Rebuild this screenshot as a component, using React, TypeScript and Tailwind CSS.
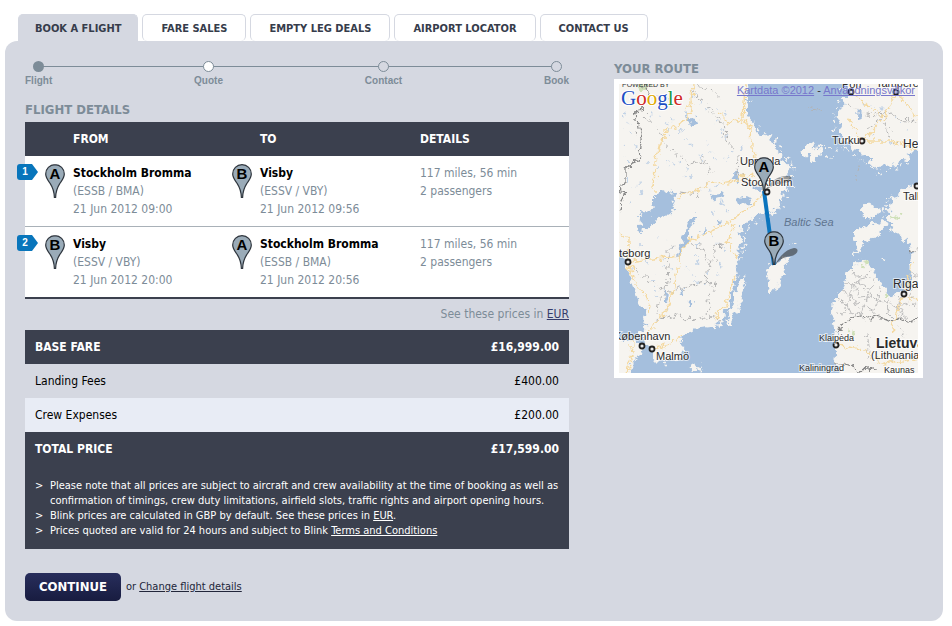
import type { ReactNode } from "react";

const tabs = ["BOOK A FLIGHT", "FARE SALES", "EMPTY LEG DEALS", "AIRPORT LOCATOR", "CONTACT US"];

const steps = ["Flight", "Quote", "Contact", "Book"];

const stockholm = { pin: "A", name: "Stockholm Bromma", code: "(ESSB / BMA)" };
const visby = { pin: "B", name: "Visby", code: "(ESSV / VBY)" };

const legs = [
  { from: stockholm, to: visby, departs: "21 Jun 2012 09:00", arrives: "21 Jun 2012 09:56" },
  { from: visby, to: stockholm, departs: "21 Jun 2012 20:00", arrives: "21 Jun 2012 20:56" },
];

const cities = [
  { x: 148, y: 108 },
  { x: 243, y: 57 },
  { x: 232, y: 8 },
  { x: 277, y: 8 },
  { x: 298, y: 102 },
  { x: 285, y: 210 },
  { x: 217, y: 261 },
  { x: 9, y: 178 },
  { x: 23, y: 262 },
  { x: 33, y: 265 },
];

const labels = [
  { x: 121, y: 81, size: 11, text: "Uppsala" },
  { x: 122, y: 102, size: 11, text: "Stockholm" },
  { x: 213, y: 60, size: 11, text: "Turku" },
  { x: 284, y: 64, size: 12, text: "Helsinki" },
  { x: 284, y: 116, size: 11, text: "Tallinn" },
  { x: 223, y: 4, size: 11, text: "Pori" },
  { x: 257, y: 3, size: 11, text: "Tampere" },
  { x: 274, y: 204, size: 12, text: "Rīga" },
  { x: 200, y: 257, size: 9, text: "Klaipėda" },
  { x: 180, y: 287, size: 9, text: "Kaliningrad" },
  { x: 265, y: 289, size: 9, text: "Kaunas" },
  { x: 252, y: 275, size: 11, text: "(Lithuania)" },
  { x: -6, y: 173, size: 11, text: "öteborg" },
  { x: -5, y: 256, size: 11, text: "København" },
  { x: 37, y: 276, size: 11, text: "Malmö" },
];

function PinShape({ letter }: { letter: string }) {
  return (
    <>
      <path
        d="M10 .7C4.7.7.7 4.8.7 10c0 3.8 2.2 6.1 4.4 9.3C7.600 23.100 9.200 27.300 9.400 33.500h1.200c.2-6.200 1.800-10.400 4.300-14.200 2.200-3.200 4.400-5.500 4.400-9.300C19.300 4.800 15.300.7 10 .7Z"
        fill="#9aabb8"
        stroke="#2e353d"
        strokeWidth="1.200"
      />
      <text x="10" y="15" textAnchor="middle" fontSize="15" fontWeight="700" fontFamily="Liberation Sans, sans-serif" fill="#000">
        {letter}
      </text>
    </>
  );
}

function Pin({ letter }: { letter: string }) {
  return (
    <svg className="h-[34px] w-5 shrink-0" viewBox="0 0 20 34" aria-hidden="true">
      <PinShape letter={letter} />
    </svg>
  );
}

function LegBadge({ number }: { number: number }) {
  return (
    <span className="absolute top-2 -left-2 flex h-4 w-[21px]">
      <svg className="absolute inset-0" width="21" height="16" viewBox="0 0 21 16" aria-hidden="true">
        <path d="M3 0h12l6 8-6 8H3a3 3 0 0 1-3-3V3a3 3 0 0 1 3-3Z" fill="#0875bb" />
      </svg>
      <span className="relative w-4 text-center font-[Liberation_Sans,sans-serif] text-[10px] leading-4 font-bold text-white">{number}</span>
    </span>
  );
}

function Airport({ place, time }: { place: typeof visby; time: string }) {
  return (
    <div className="flex gap-2">
      <Pin letter={place.pin} />
      <div>
        <p className="font-bold text-black">{place.name}</p>
        <p>{place.code}</p>
        <p>{time}</p>
      </div>
    </div>
  );
}

function TextLink({ children }: { children: ReactNode }) {
  return (
    <a href="#" className="underline">
      {children}
    </a>
  );
}

function RouteMap() {
  return (
    <div className="relative border-5 border-white">
      <svg className="block w-full" viewBox="0 0 299 289" role="img" aria-label="Route from Stockholm to Visby" fontFamily="Liberation Sans, sans-serif">
        {/* Roughens coastlines and lake shores */}
        <filter id="coast" filterUnits="userSpaceOnUse" x="-10" y="-10" width="319" height="309">
          <feTurbulence type="fractalNoise" baseFrequency=".16" numOctaves="3" seed="4" />
          <feDisplacementMap in="SourceGraphic" scale="11" xChannelSelector="R" yChannelSelector="G" />
        </filter>
        <rect width="299" height="289" fill="#a5bfdd" />

        <g filter="url(#coast)">
          {/* Land */}
          <g fill="#f6f4f0" stroke="#f6f4f0" strokeWidth="1" strokeLinejoin="round">
            <path d="M-10 -10H126V0L129 6 126 13 130 20 127 28 129 34 134 38 133 45 139 47 142 53 149 51 151 57 156 60 157 67 162 70 161 76 168 80 171 86 168 91 170 98 166 101 167 106 163 109 164 115 159 118 160 123 153 126 149 131 144 128 138 130 134 135 130 134 128 139 123 140 122 146 118 149 123 155 119 160 122 166 117 170 120 177 116 184 118 192 114 199 116 206 110 213 111 220 106 225 105 233 100 237 98 245 94 242 86 243 79 244 74 244 69 248 64 252 61 259 65 264 62 268 62 273 55 275 46 279 41 277 34 277 35 269 31 262 27 261 25 253 21 249 26 246 24 242 29 243 25 236 28 230 26 225 23 222 19 215 15 206 12 198 12 190 8 181 5 172 1 165 -10 155Z" />
            <path d="M-10 255 11 257 20 260 24 264 22 271 17 274 13 280 9 299H-10Z" />
            <path d="M73 279 81 283 79 289 72 285Z" />
            <path d="M123 195l3-2-1 8-4 10-2 12-5 9-3 8-3-1 3-11 3-5 2-12 4-8Z" />
            <path d="M149 182l8-1 7-6 6-2-4 8-2 7 3 2-5 4-1 6-6 5-4 6-1-7-2-7 1-7Z" />
            <path d="M228 -10 230 8 225 13 226 20 221 26 219 34 223 39 220 46 225 51 224 58 231 57 234 64 241 64 240 70 248 69 253 74 251 79 258 85 265 80 272 83 281 75 287 76 290 69 309 64V-10Z" />
            <path d="M182 67l5-5 6-4 2 5 5-1 2 7-4 3-1 6-7-2-1-5-6 0Z" />
            <path d="M309 97 290 103 283 106 280 112 272 114 274 120 268 124 273 130 268 137 275 141 273 147 282 151 284 156 291 153 290 160 294 168 291 174 291 187 294 196 288 206 282 210 271 213 263 200 256 191 253 183 248 177 242 176 234 183 229 187 226 200 222 211 215 218 213 232 216 240 218 259 217 276 225 299H309Z" />
            <path d="M233 151l5-5 8-3 5-4 7 1 7-4 2 5-3 6-7 4-5 4-7 3-4 8-4 3 2-8-4-4Z" />
            <path d="M238 126l6-3 5-3 6 3 7 4-6 7-6 2-6-6Z" />
          </g>

          {/* Islets */}
          <g fill="none" stroke="#f6f4f0" strokeWidth="2" strokeDasharray="2 4 1 6 3 5">
            <path d="M130 34 146 49 160 59 167 72 174 84 172 102 165 115 163 123 145 134 127 145 125 166 120 182" />
            <path d="M223 3 215 31 217 51 228 67 247 79 258 90 279 84 293 76M205 63 228 67M206 72 216 75" />
            <path d="M271 112 265 122 264 139M175 158 176 159M263 174 264 175" />
          </g>

          {/* Lakes */}
          <g fill="#a5bfdd">
            <path d="M36 109l8-3 5 3 7-2 1 8-3 6 1 5-7 6-12 5-5 7-10 3-4-2 6-7-3-6 5-4 6 1 5-6Z" />
            <path d="M76 131l2 2-5 10-3 11-8 16-3 2 1-10 6-12 5-14Z" />
            <path d="M66 28l5 6 8 1 1 5-6 2-7-7Z" />
            <path d="M91 110l9-1 7 2-5 4-9 1ZM114 88l5-3 2 9-3 6-3-4ZM117 116l9-3 8 2-4 4-11 1ZM131 100l8 3 7-2-3 5-12-1ZM134 74l3 4-1 6-3-4Z" />
            <path d="M46 207l4 3-2 8-3-3ZM70 216l4-1-1 6-4 1ZM62 205l3 1-1 4-3-1ZM239 27l4 4-1 5-4-3ZM81 147l5-4 1 3-4 4ZM97 138l5-3-2 6Z" />
          </g>
          <g fill="none" stroke="#c3d3e6" strokeWidth="2" strokeDasharray="2 9 1 6 3 13">
            <path d="M4 30 17 62 34 85 51 77 68 94M31 29 47 38 64 50 83 75M75 11 101 42 114 69M9 95 23 108 4 123M88 21 119 37M60 77 84 107 108 99" />
            <path d="M38 150 53 164 42 179 57 190 69 184 84 205 92 183M92 151 106 167 98 190M34 194 37 213 52 228M244 19 265 25 290 45M253 51 276 62" />
            <path d="M5 60 12 104 26 98M38 12 56 20 49 60M86 58 100 80 124 62M104 118 92 130 112 128M78 160 80 190M22 160 30 184" />
          </g>

          {/* Parks */}
          <path
            d="M20 0h10l-1 9-6-3ZM242 177l6-1 2 4-6 2ZM266 207l5 4-3 4-3-4ZM233 244l4 1-2 6-4 1ZM273 133l8-2 1 3-7 1Z"
            fill="#cfe0b8"
          />

          {/* Region borders */}
          <g fill="none" stroke="#b2b2b2" strokeWidth="1" strokeDasharray="5 2">
            <path d="M26 31 37 43 45 59 60 71 69 80 86 75 91 88 87 102M73 5 83 18 91 22 97 34 105 40 108 57 117 67M119 72 118 90 127 94M77 2 91 5 103 16M60 108 81 111" />
            <path d="M13 184 25 193 34 199 48 207 50 184 49 166 57 161M71 160 84 164 89 178 97 176 95 162 106 159M89 178 87 198 98 202 88 216 90 231 72 237 59 230 37 236 41 216 47 208 62 205 87 198M90 231 100 236" />
            <path d="M228 19 244 29 258 32 267 27 281 36 298 38M246 47 263 33 276 62M189 25 203 26M236 95 240 84" />
          </g>
          <g fill="none" stroke="#bdbdbd" strokeWidth="1">
            <path d="M233 187 239 195 248 194 253 187M227 198 235 202 239 195 245 205 253 201 257 193M224 207 232 211 235 202 241 214 250 213 253 201M219 217 228 220 232 211 239 222 245 221 250 213 259 216 260 204M217 228 226 229 228 220 233 231 242 229 245 221 254 226 259 216 269 219 272 213M242 229 247 238M254 226 260 236 268 228 269 219 279 222 282 212M268 228 276 236 283 230 279 222 291 219 293 204M283 230 290 236M291 219 299 224M291 190 299 193" />
            <path d="M248 248 250 262 247 275M281 243 287 254M276 271 270 281M299 204 288 198" strokeDasharray="4 2" />
          </g>
          <g fill="none" stroke="#868686" strokeWidth="1.200">
            <path d="M24 -5 28 9 26 23 16 31 20 48 22 65 19 76 7 85 7 97 2 106 5 113 1 128" />
            <path d="M217 247 226 239 236 233 250 235 258 232 270 237 282 234 290 238 305 233M218 279 232 282 240 287 259 284M291 168 305 165" />
          </g>

          {/* Roads */}
          <g fill="none" stroke="#f4d9a0" strokeWidth="1.400">
            <path d="M9 178 16 199 27 212 31 226M9 178 10 155 0 148M9 178 40 174 60 171 68 158 97 145 124 129 145 109M60 171 56 199 50 221 38 239 26 251M59 112 76 108 91 98 110 99 131 90 147 108M145 109 143 86 133 63 132 44 124 35 126 2M74 0 73 18 67 36 45 48 40 66 36 79 35 106M100 29 110 39 124 35M114 140 109 159 118 176M116 190 108 217 96 235M12 254 14 270 8 289M34 265 50 260 62 253" />
            <path d="M243 57 273 57 299 67M243 57 265 34 277 8M265 34 236 12M243 57 230 36M277 8 299 35M285 210 299 218M285 210 293 178M285 210 275 235 272 249M217 261 242 265 265 280 299 274" />
          </g>
        </g>

        {/* Marker shadows and flight path */}
        <g fill="#3c3f42">
          <path d="M146 107C151 97 160 91 170 92c5 1 2 6-4 7-7 1-12 1-20 8Z" opacity=".5" />
          <path d="M156 181C161 171 168 165 175 164c6 0 4 7-3 8-6 1-10 2-16 9Z" opacity=".65" />
        </g>
        <path d="M145 107 155 181" stroke="#0b74bd" strokeWidth="4" />

        <g fill="#e8e8e8" stroke="#222" strokeWidth="1.800">
          {cities.map((city) => (
            <circle key={`${city.x}-${city.y}`} cx={city.x} cy={city.y} r="2.500" />
          ))}
        </g>
        <g fill="#2b2b2b" stroke="#fff" strokeWidth="2" strokeOpacity=".6" paintOrder="stroke">
          {labels.map((label) => (
            <text key={label.text} x={label.x} y={label.y} fontSize={label.size}>
              {label.text}
            </text>
          ))}
          <text x="257" y="264" fontSize="14" fontWeight="700">
            Lietuva
          </text>
        </g>
        <text x="165" y="142" fontSize="11" fontStyle="italic" fill="#5f7590">
          Baltic Sea
        </text>

        <g transform="translate(135 73)">
          <PinShape letter="A" />
        </g>
        <g transform="translate(145 147)">
          <PinShape letter="B" />
        </g>

        <text x="3" y="3" fontSize="7" fill="#333">
          POWERED BY
        </text>
        <text x="2" y="21" fontSize="21" fontFamily="Liberation Serif, serif" stroke="#fff" strokeWidth="2" paintOrder="stroke">
          <tspan fill="#1d4fc4">G</tspan>
          <tspan fill="#cf2a27">o</tspan>
          <tspan fill="#e0a800">o</tspan>
          <tspan fill="#1d4fc4">g</tspan>
          <tspan fill="#1d9a3c">l</tspan>
          <tspan fill="#cf2a27">e</tspan>
        </text>
      </svg>
      <p className="absolute top-0 right-[3px] font-[Liberation_Sans,sans-serif] text-[11px] leading-3 whitespace-nowrap text-[#333]">
        <a href="#" className="text-[#7777cc] underline">Kartdata ©2012</a> - <a href="#" className="text-[#7777cc] underline">Användningsvillkor</a>
      </p>
    </div>
  );
}

export default function App() {
  return (
    <main className="min-h-screen bg-white pt-[14px] pr-[9px] pb-[5px] pl-[5px] font-[DejaVu_Sans_Condensed,DejaVu_Sans,sans-serif] text-[12px] leading-[18px] text-[#7d8c98]">
      {/* Tabs */}
      <nav className="flex gap-1 px-[13px]">
        {tabs.map((tab, index) => (
          <a
            key={tab}
            href="#"
            className={
              index === 0
                ? "rounded-t-[5px] border border-b-0 border-[#d5d8e1] bg-[#d5d8e1] px-4 pt-[2px] text-[11px] leading-6 font-bold text-[#363c4b]"
                : "rounded-[5px] border border-b-0 border-[#d5d8e1] bg-white px-[18px] pt-[2px] text-[11px] leading-6 font-bold text-[#363c4b]"
            }
          >
            {tab}
          </a>
        ))}
      </nav>

      <div className="flex gap-[45px] rounded-[12px] bg-[#d5d8e1] p-5">
        <div className="min-w-0 flex-1">
          {/* Progress */}
          <ol className="relative flex justify-between font-[Liberation_Sans,sans-serif] text-[10px] leading-[18px] font-bold">
            <li className="absolute inset-x-3 top-[5px] h-px bg-[#7d8c98]" aria-hidden="true" />
            {steps.map((step, index) => (
              <li key={step} className="relative flex flex-col items-center">
                <span
                  className={
                    index === 0
                      ? "size-[11px] rounded-full bg-[#7d8c98]"
                      : index === 1
                        ? "size-[11px] rounded-full border border-[#7d8c98] bg-white"
                        : "size-[11px] rounded-full border border-[#7d8c98] bg-[#d5d8e1]"
                  }
                />
                {step}
              </li>
            ))}
          </ol>

          <h2 className="mt-[10px] pb-[2px] text-[13px] leading-5 font-bold">FLIGHT DETAILS</h2>

          {/* Legs */}
          <table className="w-full table-fixed border-b-2 border-[#3b404e] bg-white text-left">
            <thead className="bg-[#3b404e] text-[12px] leading-[34px] text-white">
              <tr>
                <th className="w-[207px] pl-12">FROM</th>
                <th className="w-[188px] pl-7">TO</th>
                <th>DETAILS</th>
              </tr>
            </thead>
            <tbody className="divide-y divide-[#a9b1b8] align-top">
              {legs.map((leg, index) => (
                <tr key={leg.departs}>
                  <td className="relative py-2 pl-5">
                    <LegBadge number={index + 1} />
                    <Airport place={leg.from} time={leg.departs} />
                  </td>
                  <td className="py-2">
                    <Airport place={leg.to} time={leg.arrives} />
                  </td>
                  <td className="py-2">
                    <p>117 miles, 56 min</p>
                    <p>2 passengers</p>
                  </td>
                </tr>
              ))}
            </tbody>
          </table>

          <p className="pt-[6px] pb-[7px] text-right">
            See these prices in <a href="#" className="text-[#363c6b] underline">EUR</a>
          </p>

          {/* Prices */}
          <table className="w-full text-left text-[12px] leading-[34px] text-black">
            <tbody>
              <tr className="bg-[#3b404e] text-white">
                <th className="pl-[10px]">BASE FARE</th>
                <td className="pr-[10px] text-right font-bold">£16,999.00</td>
              </tr>
              <tr>
                <th className="pl-[10px] font-normal">Landing Fees</th>
                <td className="pr-[10px] text-right">£400.00</td>
              </tr>
              <tr className="bg-[#e8ecf5]">
                <th className="pl-[10px] font-normal">Crew Expenses</th>
                <td className="pr-[10px] text-right">£200.00</td>
              </tr>
              <tr className="bg-[#3b404e] text-white">
                <th className="pl-[10px]">TOTAL PRICE</th>
                <td className="pr-[10px] text-right font-bold">£17,599.00</td>
              </tr>
            </tbody>
          </table>
          <ul className="bg-[#3b404e] px-[10px] pt-3 pb-[11px] text-[11px] leading-[15px] text-white">
            <li className="flex">
              <span className="w-[15px] shrink-0">&gt;</span>
              <span>
                Please note that all prices are subject to aircraft and crew availability at the time of booking as well as
                confirmation of timings, crew duty limitations, airfield slots, traffic rights and airport opening hours.
              </span>
            </li>
            <li className="flex">
              <span className="w-[15px] shrink-0">&gt;</span>
              <span>
                Blink prices are calculated in GBP by default. See these prices in <TextLink>EUR</TextLink>.
              </span>
            </li>
            <li className="flex">
              <span className="w-[15px] shrink-0">&gt;</span>
              <span>
                Prices quoted are valid for 24 hours and subject to Blink <TextLink>Terms and Conditions</TextLink>
              </span>
            </li>
          </ul>

          <div className="mt-6 flex items-center gap-[5px] text-[11px] text-[#22263a]">
            <button type="button" className="h-7 rounded-[5px] bg-linear-to-b from-[#282e5c] to-[#181c40] px-[14px] text-[13px] font-bold text-white">
              CONTINUE
            </button>
            <p>
              or <TextLink>Change flight details</TextLink>
            </p>
          </div>
        </div>

        <section className="w-[309px] shrink-0">
          <h2 className="-mt-[2px] text-[13px] leading-5 font-bold">YOUR ROUTE</h2>
          <RouteMap />
        </section>
      </div>
    </main>
  );
}
